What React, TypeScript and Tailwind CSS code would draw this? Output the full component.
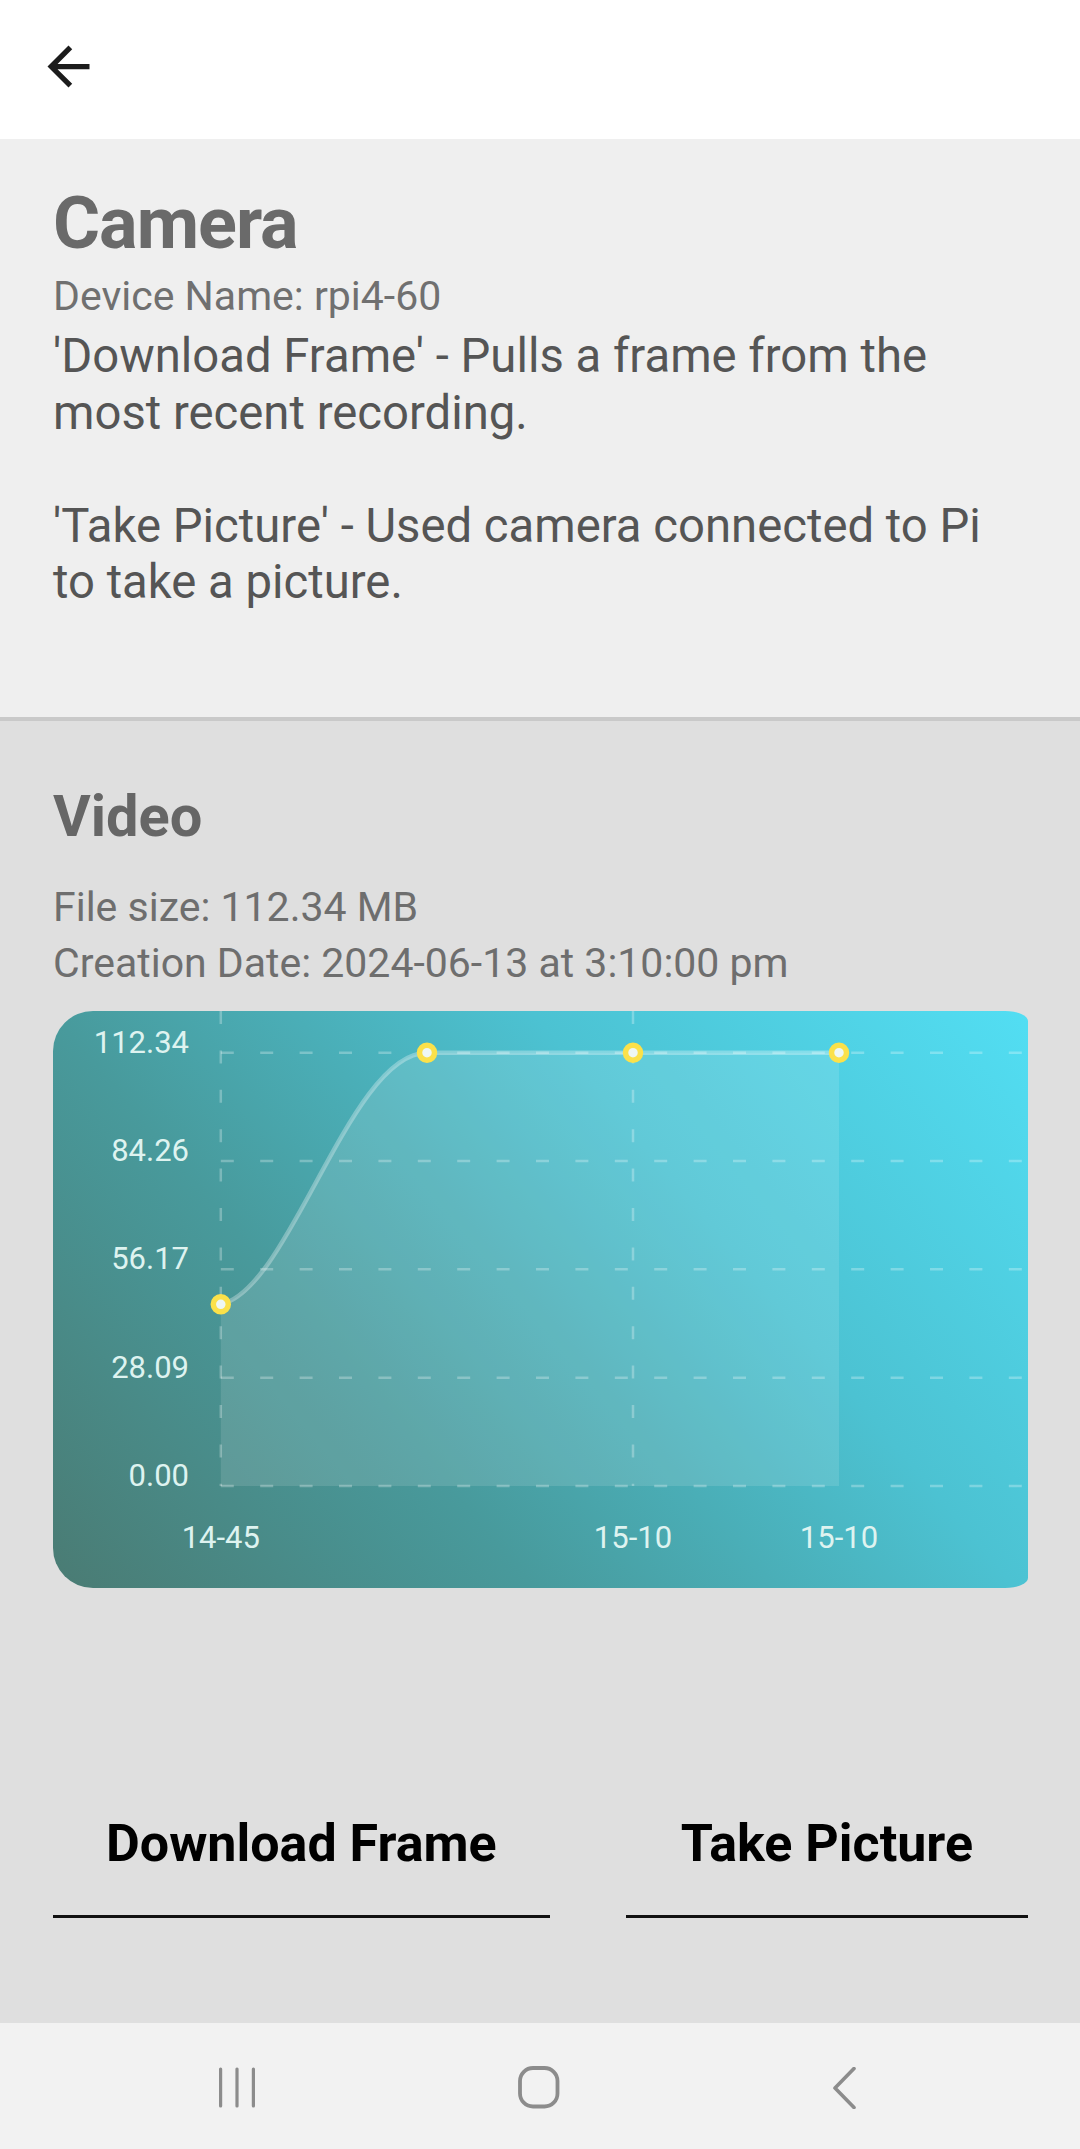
import React from "react";

const GRID_Y = [41.7, 150, 258.3, 366.7, 475];
const Y_LABELS = ["112.34", "84.26", "56.17", "28.09", "0.00"];

function Chart() {
  const lineStroke = "rgba(255,255,255,0.28)";
  const pts = [
    [167.8, 293.3],
    [374, 41.7],
    [580, 41.7],
    [786, 41.7],
  ];
  const curve = `M167.8 293.3 C237 279 297 41.7 374 41.7 L786 41.7`;
  const area = `${curve} L786 475 L167.8 475 Z`;
  return (
    <svg width="975" height="577" viewBox="0 0 975 577" className="block">
      <path d={area} fill="rgba(255,255,255,0.12)" />
      {GRID_Y.map((y) => (
        <line
          key={y}
          x1="167.8"
          x2="975"
          y1={y}
          y2={y}
          stroke={lineStroke}
          strokeWidth="2.5"
          strokeDasharray="13 26.4"
        />
      ))}
      {[167.8, 580].map((x) => (
        <line
          key={x}
          x1={x}
          x2={x}
          y1="0"
          y2="475"
          stroke={lineStroke}
          strokeWidth="2.5"
          strokeDasharray="13 26.4"
        />
      ))}
      <path d={curve} fill="none" stroke="rgba(255,255,255,0.3)" strokeWidth="4.5" />
      {pts.map(([x, y]) => (
        <circle key={x} cx={x} cy={y} r="7.5" fill="#eef7f4" stroke="#fbe14a" strokeWidth="5.5" />
      ))}
      {Y_LABELS.map((t, i) => (
        <text
          key={t}
          x="136"
          y={GRID_Y[i]}
          textAnchor="end"
          fill="#def3f0"
          fontSize="31"
          fontFamily="Roboto, sans-serif"
        >
          {t}
        </text>
      ))}
      {[
        ["14-45", 167.8],
        ["15-10", 580],
        ["15-10", 786],
      ].map(([t, x], i) => (
        <text
          key={i}
          x={x as number}
          y="537"
          textAnchor="middle"
          fill="#def3f0"
          fontSize="31"
          fontFamily="Roboto, sans-serif"
        >
          {t}
        </text>
      ))}
    </svg>
  );
}

export default function App() {
  return (
    <div className="w-[1080px] h-[2149px] flex flex-col font-['Roboto',sans-serif] overflow-hidden">
      {/* Header */}
      <div className="h-[139px] shrink-0 bg-white relative">
        <svg
          width="63"
          height="63"
          viewBox="0 0 24 24"
          className="absolute left-[36.5px] top-[34.5px]"
        >
          <path
            d="M20 11H7.83l5.59-5.59L12 4l-8 8 8 8 1.41-1.41L7.83 13H20v-2z"
            fill="#1c1c1c"
          />
        </svg>
      </div>

      {/* Camera section */}
      <div className="shrink-0 bg-[#efefef] px-[53px] pt-[42px] pb-[106px]">
        <div className="text-[72px] leading-[86px] font-bold tracking-[-1px] text-[#6a6a6a]">Camera</div>
        <div className="mt-[5px] text-[41px] leading-[49px] text-[#707070]">
          Device Name: rpi4-60
        </div>
        <div className="mt-[7px] text-[47.25px] leading-[56.5px] text-[#555555]">
          'Download Frame' - Pulls a frame from the
          <br />
          most recent recording.
          <br />
          <br />
          'Take Picture' - Used camera connected to Pi
          <br />
          to take a picture.
        </div>
      </div>
      <div className="h-[4px] shrink-0 bg-[#c9c9c9]" />

      {/* Video section */}
      <div className="flex-1 bg-[#dfdfdf] px-[53px] pt-[61px] flex flex-col">
        <div className="text-[57.75px] leading-[68px] font-bold text-[#666666]">Video</div>
        <div className="mt-[29px] text-[41px] leading-[56.6px] text-[#6e6e6e]">
          File size: 112.34 MB
          <br />
          Creation Date: 2024-06-13 at 3:10:00 pm
        </div>
        <div className="mt-[19px] w-[975px] h-[577px] rounded-tl-[40px] rounded-bl-[40px] rounded-tr-[23px_10px] rounded-br-[23px_10px] overflow-hidden bg-[linear-gradient(50deg,#4a7b73_0%,#489a9c_33%,#4cc2d2_66%,#52def3_100%)]">
          <Chart />
        </div>
        <div className="mt-[225px] flex justify-between w-[975px]">
          <button className="px-[53px] pb-[41px] border-b-[3px] border-[#111111] text-[52px] leading-[61.5px] font-bold text-black">
            Download Frame
          </button>
          <button className="px-[55px] pb-[41px] border-b-[3px] border-[#111111] text-[52px] leading-[61.5px] font-bold text-black">
            Take Picture
          </button>
        </div>
      </div>

      {/* Nav bar */}
      <div className="h-[126px] shrink-0 bg-[#f2f2f2] flex items-start pt-[44px] pl-[219px]">
        <svg width="36" height="41" viewBox="0 0 36 41">
          <rect x="0" y="0.5" width="3.2" height="40" rx="1.5" fill="#8c8c8c" />
          <rect x="16.4" y="0.5" width="3.2" height="40" rx="1.5" fill="#8c8c8c" />
          <rect x="32.8" y="0.5" width="3.2" height="40" rx="1.5" fill="#8c8c8c" />
        </svg>
        <svg width="42" height="43" viewBox="0 0 42 43" className="ml-[263px] -mt-[1px]">
          <rect x="2" y="2" width="37.5" height="38.5" rx="13" fill="none" stroke="#8c8c8c" strokeWidth="3.8" />
        </svg>
        <svg width="26" height="42" viewBox="0 0 26 42" className="ml-[270px]">
          <path d="M24 1.5 L5 21 L24 40.5" fill="none" stroke="#8c8c8c" strokeWidth="3.6" strokeLinecap="round" strokeLinejoin="round" />
        </svg>
      </div>
    </div>
  );
}
